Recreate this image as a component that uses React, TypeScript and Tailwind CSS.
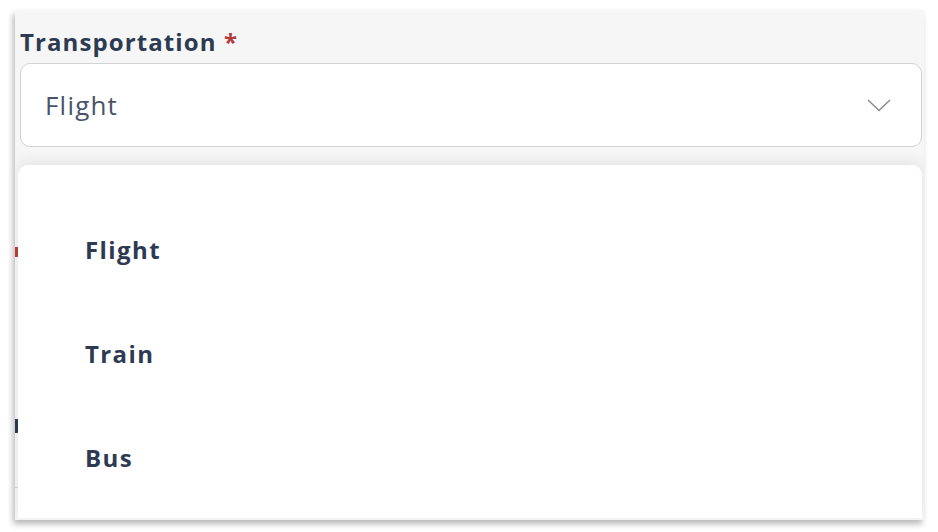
const options = ['Flight', 'Train', 'Bus'];

export default function App() {
  return (
    <div className="w-[938px] h-[532px] bg-white overflow-hidden pl-[15px] pt-[10px] font-['Open_Sans',sans-serif]">
      <div className="relative w-[909px] h-[510px] bg-[#f6f6f6] overflow-hidden shadow-[-2px_4px_6px_rgba(0,0,0,0.28)]">
        <div className="pl-[5px] pr-[2px] pt-[17px]">
          <label className="block text-[24px] leading-[30px] font-bold tracking-[1.1px] text-[#2c3a52]">
            Transportation <span className="text-[#b23b3b]">*</span>
          </label>
          <div className="mt-[6px] h-[84px] rounded-[10px] border border-[#d2d2d2] bg-white flex items-center justify-between pl-[24px] pr-[30px]">
            <span className="text-[26px] tracking-[1.2px] text-[#4a5468]">Flight</span>
            <svg width="24" height="13" viewBox="0 0 24 13" fill="none">
              <polyline points="1,1 12,11.5 23,1" stroke="#8a8d93" strokeWidth="1.6" />
            </svg>
          </div>

          {/* fields underneath the open menu, only their edges show */}
          <div className="mt-[98px] -ml-[10px] h-[14px] flex items-center">
            <span className="block w-[12px] h-[10px] rounded-full bg-[#c23b3b]" />
          </div>
          <div className="mt-[160px] -ml-[5px] w-[4px] h-[14px] bg-[#2c3a52] rounded-r-[2px]" />
          <div className="mt-[54px] -ml-[5px] h-px bg-[#d2d2d2]" />
        </div>

        <div className="absolute left-[3px] right-[2px] top-[155px] bottom-[2px] rounded-t-[10px] bg-white shadow-[0_-4px_14px_rgba(0,0,0,0.07)] pt-[33px] pl-[67px]">
          {options.map((opt) => (
            <div key={opt} className="h-[104px] flex items-center text-[24px] font-bold tracking-[1.4px] text-[#2e3a52]">
              {opt}
            </div>
          ))}
        </div>
      </div>
    </div>
  );
}
